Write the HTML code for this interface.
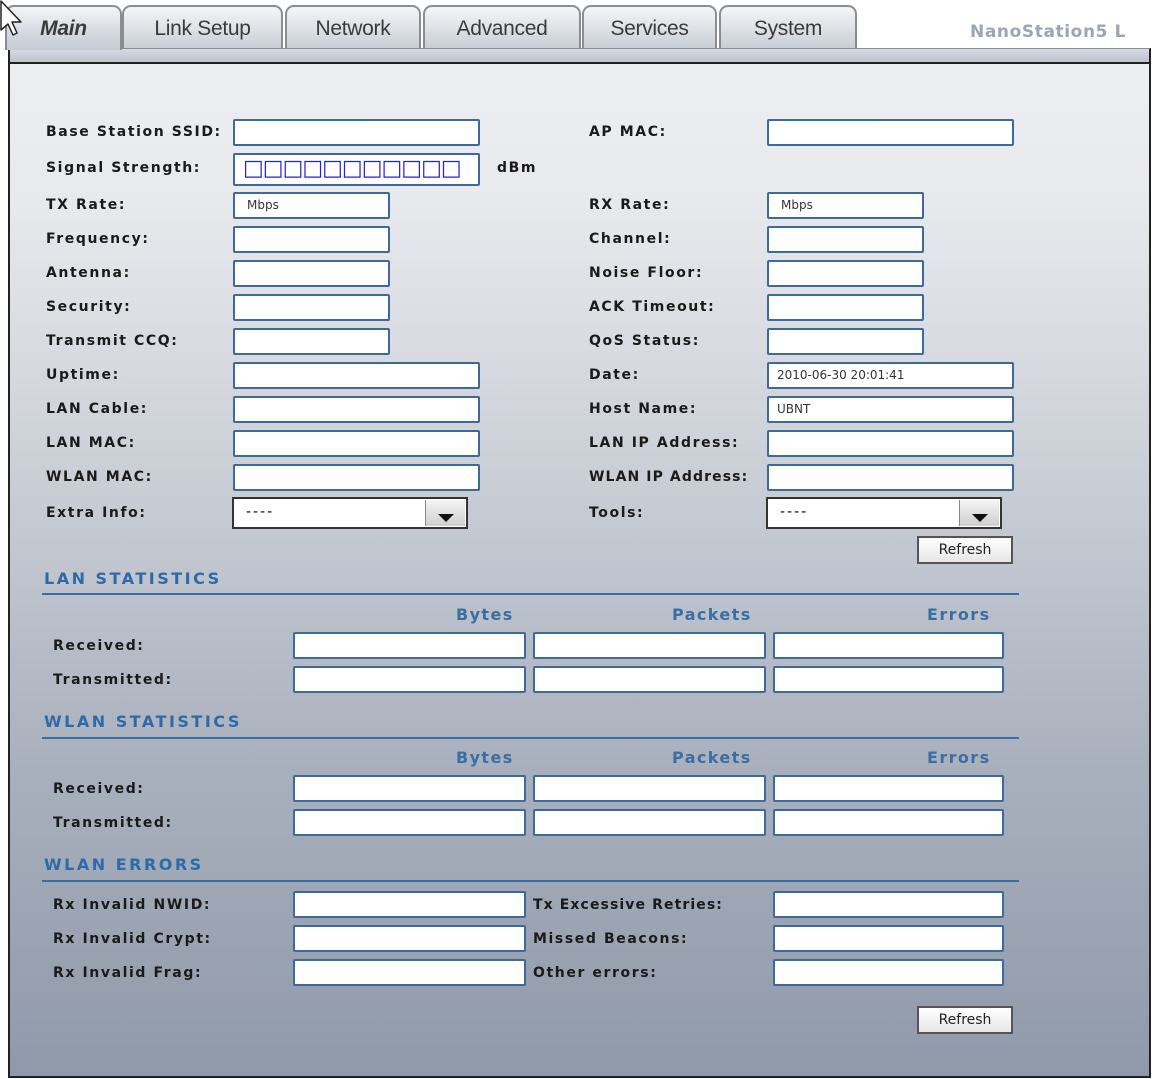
<!DOCTYPE html>
<html><head><meta charset="utf-8"><style>
*{margin:0;padding:0;box-sizing:border-box}
body{width:1160px;height:1079px;background:#fff;position:relative;overflow:hidden;font-family:"DejaVu Sans","Liberation Sans",sans-serif}
.a{position:absolute}
.tab{position:absolute;top:5px;height:43px;border:2px solid #8a8d92;border-bottom:none;border-radius:9px 9px 0 0;background:linear-gradient(#f4f5f7,#dfe2e7 50%,#c9ced6);font-family:"Liberation Sans",sans-serif;font-size:21px;color:#3a3a3a;text-align:center;line-height:44px;letter-spacing:-0.3px}
#panel{position:absolute;left:8px;top:48px;width:1143px;height:1030px;border:2px solid #222;border-top:1px solid #8a8d92;background:linear-gradient(#eeeff1 0,#e8e9ed 15%,#c6cbd3 45%,#a9b0bd 70%,#9099aa 100%)}
#band{position:absolute;left:0;top:0;width:100%;height:15px;background:linear-gradient(#d6dae1,#bcc3ce);border-bottom:2px solid #222}
.l{position:absolute;font-weight:bold;font-size:14px;letter-spacing:1.6px;color:#1a1a1a;white-space:nowrap}
.i{position:absolute;background:#fff;border:2px solid #3d6a9a;border-radius:2px;height:27px;font-size:12px;color:#333;padding-left:12px;line-height:23px}
.h{position:absolute;font-weight:bold;font-size:16px;letter-spacing:2.5px;color:#2f6aa8}
.hl{position:absolute;left:42px;width:977px;height:2px;background:#3a6ea5}
.c{position:absolute;font-weight:bold;font-size:16px;letter-spacing:1.4px;color:#3a6ea5}
.sel{position:absolute;background:#fff;border:2px solid #333;height:32px;font-size:14px;padding-left:12px;line-height:26px;letter-spacing:2px}
.sel b{position:absolute;right:1px;top:1px;width:40px;height:26px;background:linear-gradient(#f4f4f4,#cfcfcf);border-left:1px solid #888}
.sel b:after{content:"";position:absolute;left:12px;top:14px;border:8px solid transparent;border-top:8px solid #111;border-bottom:0}
.btn{position:absolute;width:96px;height:28px;border:2px solid #555;background:linear-gradient(#fff,#e6e6e6);font-size:14px;text-align:center;line-height:24px;color:#222}
</style></head><body>
<div id="panel"><div id="band"></div></div>
<div class="tab" style="left:5px;width:117px;border-color:#8a8d92;background:linear-gradient(#f4f5f7,#d5d9e0 60%,#c6ccd6);font-style:italic;font-weight:bold;height:45px;z-index:2">Main</div>
<div class="tab" style="left:122px;width:161px">Link Setup</div>
<div class="tab" style="left:285px;width:136px">Network</div>
<div class="tab" style="left:423px;width:158px">Advanced</div>
<div class="tab" style="left:582px;width:135px">Services</div>
<div class="tab" style="left:719px;width:138px">System</div>
<div class="a" style="left:970px;top:22px;font-weight:bold;font-size:17px;letter-spacing:0.6px;color:#9aa6b6">NanoStation5 L</div>

<div class="l" style="left:46px;top:124px">Base Station SSID:</div><div class="i" style="left:233px;top:119px;width:247px"></div>
<div class="l" style="left:46px;top:160px">Signal Strength:</div><div class="i" style="left:233px;top:153px;width:247px;height:33px;color:#2222dd;font-size:22px;line-height:28px;padding-left:8px;letter-spacing:-1px">□□□□□□□□□□□</div>
<div class="l" style="left:497px;top:160px">dBm</div>
<div class="l" style="left:46px;top:197px">TX Rate:</div><div class="i" style="left:233px;top:192px;width:157px">Mbps</div>
<div class="l" style="left:46px;top:231px">Frequency:</div><div class="i" style="left:233px;top:226px;width:157px"></div>
<div class="l" style="left:46px;top:265px">Antenna:</div><div class="i" style="left:233px;top:260px;width:157px"></div>
<div class="l" style="left:46px;top:299px">Security:</div><div class="i" style="left:233px;top:294px;width:157px"></div>
<div class="l" style="left:46px;top:333px">Transmit CCQ:</div><div class="i" style="left:233px;top:328px;width:157px"></div>
<div class="l" style="left:46px;top:367px">Uptime:</div><div class="i" style="left:233px;top:362px;width:247px"></div>
<div class="l" style="left:46px;top:401px">LAN Cable:</div><div class="i" style="left:233px;top:396px;width:247px"></div>
<div class="l" style="left:46px;top:435px">LAN MAC:</div><div class="i" style="left:233px;top:430px;width:247px"></div>
<div class="l" style="left:46px;top:469px">WLAN MAC:</div><div class="i" style="left:233px;top:464px;width:247px"></div>
<div class="l" style="left:46px;top:505px">Extra Info:</div><div class="sel" style="left:232px;top:497px;width:236px">----<b></b></div>

<div class="l" style="left:589px;top:124px">AP MAC:</div><div class="i" style="left:767px;top:119px;width:247px"></div>
<div class="l" style="left:589px;top:197px">RX Rate:</div><div class="i" style="left:767px;top:192px;width:157px">Mbps</div>
<div class="l" style="left:589px;top:231px">Channel:</div><div class="i" style="left:767px;top:226px;width:157px"></div>
<div class="l" style="left:589px;top:265px">Noise Floor:</div><div class="i" style="left:767px;top:260px;width:157px"></div>
<div class="l" style="left:589px;top:299px">ACK Timeout:</div><div class="i" style="left:767px;top:294px;width:157px"></div>
<div class="l" style="left:589px;top:333px">QoS Status:</div><div class="i" style="left:767px;top:328px;width:157px"></div>
<div class="l" style="left:589px;top:367px">Date:</div><div class="i" style="left:767px;top:362px;width:247px;padding-left:8px">2010-06-30 20:01:41</div>
<div class="l" style="left:589px;top:401px">Host Name:</div><div class="i" style="left:767px;top:396px;width:247px;padding-left:8px">UBNT</div>
<div class="l" style="left:589px;top:435px">LAN IP Address:</div><div class="i" style="left:767px;top:430px;width:247px"></div>
<div class="l" style="left:589px;top:469px;letter-spacing:1.1px">WLAN IP Address:</div><div class="i" style="left:767px;top:464px;width:247px"></div>
<div class="l" style="left:589px;top:505px">Tools:</div><div class="sel" style="left:766px;top:497px;width:236px">----<b></b></div>
<div class="btn" style="left:917px;top:536px">Refresh</div>

<div class="h" style="left:44px;top:569px">LAN STATISTICS</div><div class="hl" style="top:593px"></div>
<div class="c" style="left:456px;top:605px">Bytes</div><div class="c" style="left:672px;top:605px">Packets</div><div class="c" style="left:927px;top:605px">Errors</div>
<div class="l" style="left:53px;top:638px">Received:</div>
<div class="i" style="left:293px;top:632px;width:233px"></div><div class="i" style="left:533px;top:632px;width:233px"></div><div class="i" style="left:773px;top:632px;width:231px"></div>
<div class="l" style="left:53px;top:672px">Transmitted:</div>
<div class="i" style="left:293px;top:666px;width:233px"></div><div class="i" style="left:533px;top:666px;width:233px"></div><div class="i" style="left:773px;top:666px;width:231px"></div>

<div class="h" style="left:44px;top:712px">WLAN STATISTICS</div><div class="hl" style="top:737px"></div>
<div class="c" style="left:456px;top:748px">Bytes</div><div class="c" style="left:672px;top:748px">Packets</div><div class="c" style="left:927px;top:748px">Errors</div>
<div class="l" style="left:53px;top:781px">Received:</div>
<div class="i" style="left:293px;top:775px;width:233px"></div><div class="i" style="left:533px;top:775px;width:233px"></div><div class="i" style="left:773px;top:775px;width:231px"></div>
<div class="l" style="left:53px;top:815px">Transmitted:</div>
<div class="i" style="left:293px;top:809px;width:233px"></div><div class="i" style="left:533px;top:809px;width:233px"></div><div class="i" style="left:773px;top:809px;width:231px"></div>

<div class="h" style="left:44px;top:855px">WLAN ERRORS</div><div class="hl" style="top:880px"></div>
<div class="l" style="left:53px;top:897px">Rx Invalid NWID:</div><div class="i" style="left:293px;top:891px;width:233px"></div>
<div class="l" style="left:533px;top:897px;letter-spacing:1.1px">Tx Excessive Retries:</div><div class="i" style="left:773px;top:891px;width:231px"></div>
<div class="l" style="left:53px;top:931px">Rx Invalid Crypt:</div><div class="i" style="left:293px;top:925px;width:233px"></div>
<div class="l" style="left:533px;top:931px">Missed Beacons:</div><div class="i" style="left:773px;top:925px;width:231px"></div>
<div class="l" style="left:53px;top:965px">Rx Invalid Frag:</div><div class="i" style="left:293px;top:959px;width:233px"></div>
<div class="l" style="left:533px;top:965px">Other errors:</div><div class="i" style="left:773px;top:959px;width:231px"></div>
<div class="btn" style="left:917px;top:1006px">Refresh</div>

<svg class="a" style="left:0;top:0;z-index:5;overflow:visible" width="26" height="44" viewBox="0 0 26 44"><path d="M1 1 L1 30 L8 24 L13 35 L17 33 L12 22 L21 22 Z" fill="#fff" stroke="#222" stroke-width="1.5" stroke-linejoin="round"/></svg>
</body></html>
